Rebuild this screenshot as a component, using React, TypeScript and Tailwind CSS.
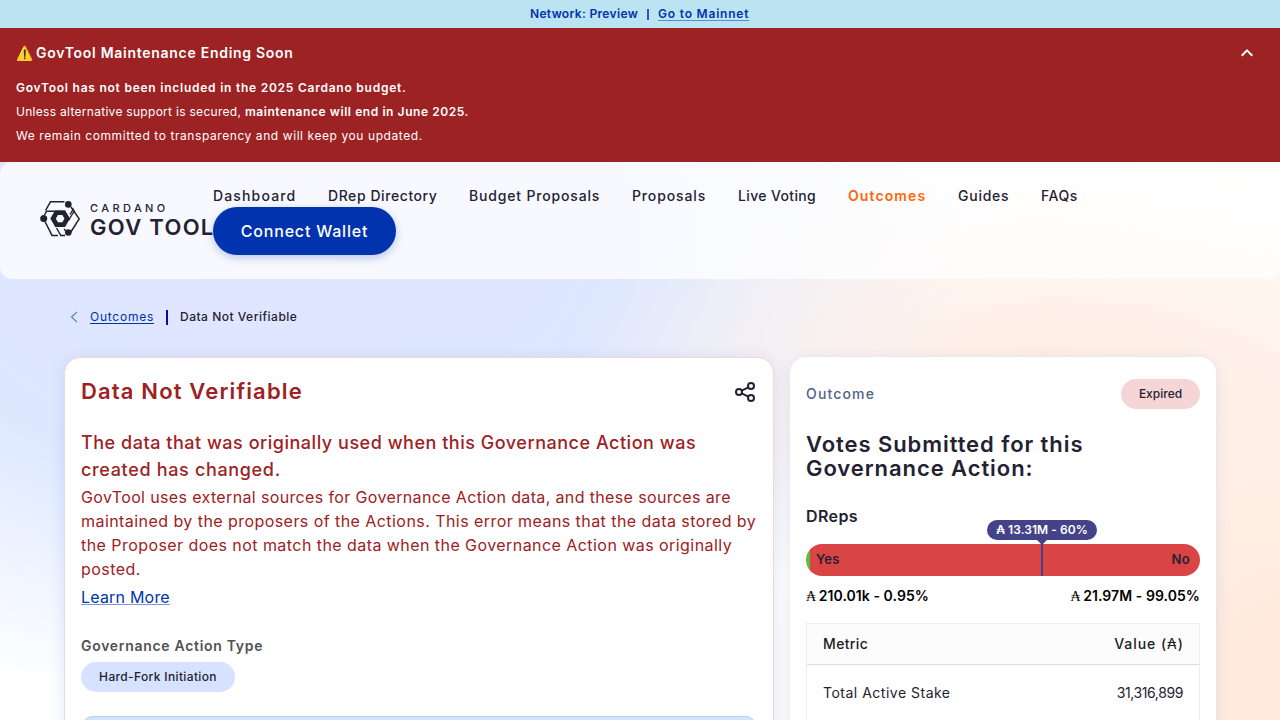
import React from "react";

const nav = [
  { label: "Dashboard", cls: "w-[83px] tracking-[1.15px]" },
  { label: "DRep Directory", cls: "w-[109px] tracking-[0.57px]" },
  { label: "Budget Proposals", cls: "w-[131px] tracking-[0.83px]" },
  { label: "Proposals", cls: "w-[74px] tracking-[0.87px]" },
  { label: "Live Voting", cls: "w-[78px] tracking-[0.36px]" },
  { label: "Outcomes", cls: "w-[78px] font-semibold tracking-[1.1px] text-[#ff640a]" },
  { label: "Guides", cls: "w-[51px] tracking-[0.75px]" },
  { label: "FAQs", cls: "w-[37px] tracking-[0.5px]" },
];

function LogoMark() {
  return (
    <svg width="40" height="36" viewBox="0 0 40 36" fill="none" stroke="#242232" className="shrink-0">
      <path d="M24.5 .8H10.5L5.5 9.5" strokeWidth="1.5" />
      <path d="M4.5 19.5L12 34.4H18M20 34.4H25" strokeWidth="1.5" />
      <path d="M31 6L39.2 17.8L30.5 31.5" strokeWidth="1.5" />
      <path d="M4.5 14L6.5 10.3H15M34.5 9.5L28.5 19.5M16.5 27L20.8 34.4M24.2 27.8L25.8 30.5M33.6 7.5L30 13.5" strokeWidth="1.4" />
      <path d="M16.6 11.6H23.7L27.2 17.6L23.7 23.6H16.6L13.1 17.6Z" strokeWidth="4.8" />
      <circle cx="28.3" cy="3.4" r="3.3" fill="#242232" stroke="none" />
      <circle cx="3.7" cy="17.4" r="3.5" fill="#242232" stroke="none" />
      <circle cx="28.3" cy="31.5" r="3.3" fill="#242232" stroke="none" />
    </svg>
  );
}

function Ada() {
  return <span className="mr-[-1px] font-['Liberation_Serif','DejaVu_Serif',serif] font-medium">₳</span>;
}

export default function App() {
  return (
    <div className="flex h-[720px] w-[1280px] flex-col overflow-hidden bg-white font-['Inter',sans-serif] text-[#242232]">
      <div className="flex h-7 shrink-0 items-center justify-center bg-[#bce3f1] text-xs font-semibold whitespace-nowrap text-[#0033ad]">
        <span className="w-[108px] tracking-[0.33px]">Network: Preview</span>
        <span className="mr-[9px] ml-[9px] h-[11px] w-[2px] bg-[#0033ad]/80" />
        <span className="w-[92px] tracking-[0.8px] underline decoration-[#0033ad]/50 underline-offset-2">Go to Mainnet</span>
      </div>
      <div className="flex h-[134px] shrink-0 justify-between bg-[#9c2224] px-4 text-white">
        <div className="flex flex-col text-xs leading-6">
          <div className="mt-[13px] mb-[11px] text-sm leading-6 font-semibold"><span className="-mr-[0.5px]">⚠️</span> <span className="tracking-[0.72px]">GovTool Maintenance Ending Soon</span></div>
          <div className="font-semibold tracking-[0.76px]">GovTool has not been included in the 2025 Cardano budget.</div>
          <div className="tracking-[0.29px]">Unless alternative support is secured, <b className="font-semibold tracking-[0.57px]">maintenance will end in June 2025.</b></div>
          <div className="tracking-[0.58px]">We remain committed to transparency and will keep you updated.</div>
        </div>
        <svg className="mt-[13px] mr-[5px]" width="24" height="24" viewBox="0 0 24 24" fill="white"><path d="M12 8l-6 6 1.41 1.41L12 10.83l4.59 4.58L18 14z" /></svg>
      </div>
      <div className="flex min-h-0 flex-1 flex-col bg-[radial-gradient(ellipse_480px_240px_at_1040px_210px,#ffede3_0%,#ffede300_100%),radial-gradient(ellipse_600px_460px_at_1330px_520px,#ffe7d8_0%,#ffe7d899_50%,#ffe7d800_100%),radial-gradient(ellipse_740px_470px_at_260px_80px,#e1e5ff_0%,#dfe6ff_25%,#dde8ff_50%,#dde8ff00_100%)]">
        <header className="flex h-[117px] shrink-0 items-start rounded-xl bg-white/75 pl-10">
          <div className="mt-[39px] flex w-[173px] gap-[10px] whitespace-nowrap">
            <LogoMark />
            <div className="w-[123px]">
              <div className="mt-[2px] text-[11px] leading-[11px] font-medium tracking-[3.4px]">CARDANO</div>
              <div className="mt-[3px] text-[22px] leading-[21px] font-semibold tracking-[1.3px]">GOV TOOL</div>
            </div>
          </div>
          <div className="relative pt-[23px]">
            <nav className="mb-px flex gap-8 text-sm leading-[21px] font-medium whitespace-nowrap">
              {nav.map((n) => <a key={n.label} className={n.cls}>{n.label}</a>)}
            </nav>
            <button className="block h-12 w-[183px] rounded-full bg-[#0033ad] pb-px text-base font-medium tracking-[0.8px] text-white shadow-[0_3px_8px_#0033ad40]">Connect Wallet</button>
          </div>
        </header>
        <div className="mt-[30px] flex h-4 shrink-0 items-center pl-[70px] text-xs whitespace-nowrap">
          <svg width="8" height="12" viewBox="0 0 8 12" fill="none" stroke="#5577cc" strokeWidth="1.1"><path d="M7 .8L1.5 6L7 11.2" /></svg>
          <a className="ml-3 w-16 tracking-[0.75px] text-[#0033ad] underline underline-offset-2">Outcomes</a>
          <span className="ml-3 h-[15px] w-[2px] bg-[#0a0aa5]" />
          <span className="ml-3 font-medium tracking-[0.5px]">Data Not Verifiable</span>
        </div>
        <main className="mt-8 flex min-h-0 flex-1 gap-4 px-16">
          <section className="flex h-[420px] w-[710px] shrink-0 flex-col rounded-2xl border border-[#fbd3d3] bg-white px-4 text-[#9c2224] shadow-[0_2px_15px_#2f62dc26]">
            <div className="mt-[17px] flex h-8 items-center justify-between">
              <h1 className="text-[22px] leading-8 font-semibold tracking-[1.15px]">Data Not Verifiable</h1>
              <svg className="mt-[2px]" width="24" height="24" viewBox="0 0 24 24" fill="none" stroke="#242232" strokeWidth="2"><circle cx="18" cy="6" r="3" /><circle cx="6" cy="12" r="3" /><circle cx="18" cy="18" r="3" /><path d="M8.7 10.7l6.6-3.4M8.7 13.3l6.6 3.4" /></svg>
            </div>
            <h2 className="mt-[22px] text-lg leading-[27px] font-medium tracking-[0.52px] whitespace-nowrap">The data that was originally used when this Governance Action was<br /><span className="tracking-[0.66px]">created has changed.</span></h2>
            <p className="mt-[2px] text-base leading-6 tracking-[0.44px] whitespace-nowrap"><span className="tracking-[0.36px]">GovTool uses external sources for Governance Action data, and these sources are</span><br />maintained by the proposers of the Actions. This error means that the data stored by<br />the Proposer does not match the data when the Governance Action was originally<br />posted.</p>
            <a className="mt-1 self-start text-base leading-6 tracking-[0.2px] text-[#0033ad] underline decoration-[#0033ad]/50">Learn More</a>
            <div className="mt-[27px] text-sm leading-5 font-semibold tracking-[0.7px] text-[#525252]">Governance Action Type</div>
            <div className="mt-[6px] flex h-[30px] w-[154px] shrink-0 items-center justify-center rounded-full bg-[#d6e2ff] text-xs font-medium tracking-[0.35px] text-[#242232]">Hard-Fork Initiation</div>
            <div className="mt-6 h-12 shrink-0 rounded-xl border border-[#a4d9e8] bg-[#d6e2ff]" />
          </section>
          <section className="h-[420px] w-[426px] shrink-0 rounded-2xl bg-white px-4 shadow-[0_2px_15px_#2f62dc20]">
            <div className="mt-[22px] flex h-[30px] items-center justify-between">
              <span className="text-sm font-medium tracking-[1.15px] text-[#506288]">Outcome</span>
              <span className="flex h-[30px] w-[79px] items-center justify-center rounded-full bg-[#f5d5d5] text-xs font-medium">Expired</span>
            </div>
            <h2 className="mt-[23px] text-[22px] leading-6 font-semibold tracking-[0.93px] whitespace-nowrap">Votes Submitted for this<br />Governance Action:</h2>
            <div className="mt-6 text-base leading-6 font-semibold tracking-[0.4px]">DReps</div>
            <div className="relative mt-[16px] flex h-8 items-center justify-between rounded-full bg-[linear-gradient(90deg,#62ba46_0_4px,#d94444_4px)] px-[10px] text-[13px] font-semibold tracking-[0.3px]">
              <span>Yes</span><span>No</span>
              <span className="absolute top-0 left-[235px] h-8 w-[2px] bg-[#444288]" />
              <span className="absolute -top-[4px] left-[231px] border-x-5 border-t-5 border-x-transparent border-t-[#444288]" />
              <span className="absolute -top-6 left-[181px] flex h-5 w-[110px] items-center justify-center rounded-full bg-[#444288] text-xs tracking-[0.05px] whitespace-nowrap text-white">₳ 13.31M - 60%</span>
            </div>
            <div className="mt-[10px] flex h-5 justify-between text-sm leading-5 font-semibold tracking-[0.06px] text-black">
              <span><Ada /> 210.01k - 0.95%</span><span><Ada /> 21.97M - 99.05%</span>
            </div>
            <div className="mt-[17px] border border-[#eeeeee] text-sm">
              <div className="flex h-[41px] items-center justify-between border-b border-[#dddddd] bg-[#fcfcfc] px-4 font-medium text-[#212121]"><span className="tracking-[0.35px]">Metric</span><span className="-mr-[0.8px] tracking-[0.95px]">Value (<span className="font-normal">₳</span>)</span></div>
              <div className="flex h-14 items-center justify-between px-4"><span className="tracking-[0.5px]">Total Active Stake</span><span className="tracking-[-0.4px]">31,316,899</span></div>
            </div>
          </section>
        </main>
      </div>
    </div>
  );
}
